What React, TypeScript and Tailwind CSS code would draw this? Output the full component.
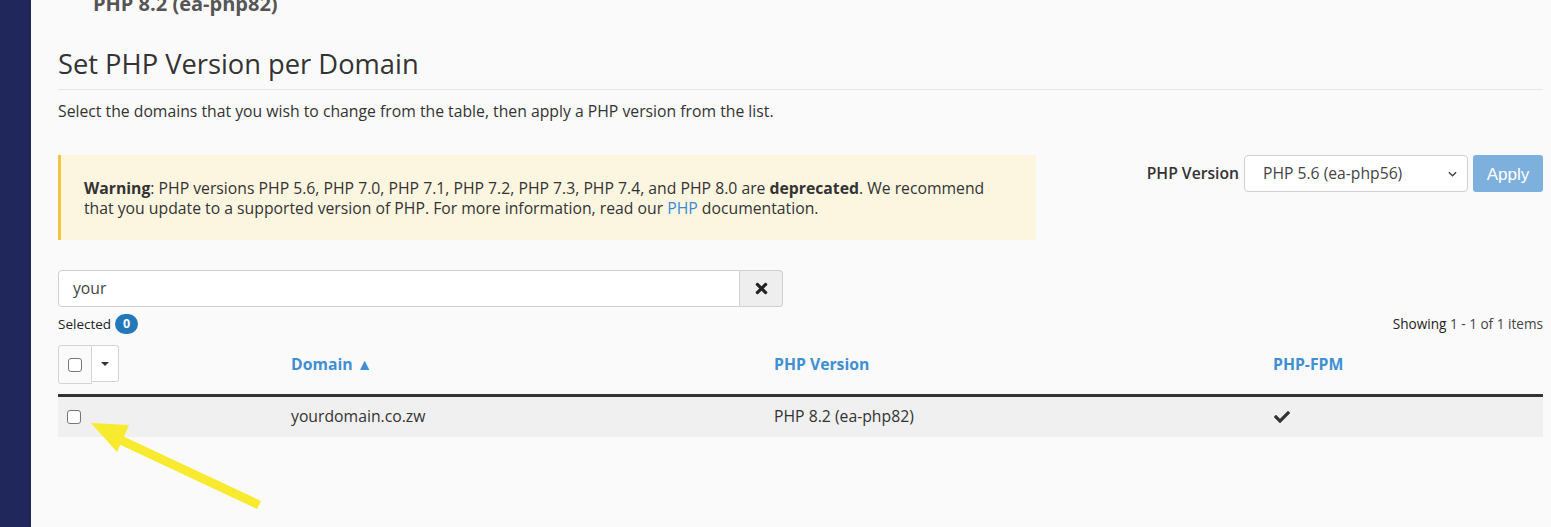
import React from 'react';

const font = { fontFamily: '"Open Sans", "Liberation Sans", sans-serif' };

function Checkbox() {
  return <span className="block w-[14px] h-[14px] rounded-[3px] border border-[#767676] bg-white" />;
}

function CheckIcon() {
  return (
    <svg viewBox="0 0 512 512" className="w-[16px] h-[16px] fill-[#333]">
      <path d="M173.9 439.4l-166.4-166.4c-10-10-10-26.2 0-36.2l36.2-36.2c10-10 26.2-10 36.2 0L192 312.7 432.1 72.6c10-10 26.2-10 36.2 0l36.2 36.2c10 10 10 26.2 0 36.2l-294.4 294.4c-10 10-26.2 10-36.2 0z" />
    </svg>
  );
}

function TimesIcon() {
  return (
    <svg viewBox="0 0 352 512" className="w-[13px] h-[17px] fill-[#222]">
      <path d="M242.7 256l100.1-100.1c12.3-12.3 12.3-32.2 0-44.5l-22.2-22.2c-12.3-12.3-32.2-12.3-44.5 0L176 189.3 75.9 89.2c-12.3-12.3-32.2-12.3-44.5 0L9.2 111.4c-12.3 12.3-12.3 32.2 0 44.5L109.3 256 9.2 356.1c-12.3 12.3-12.3 32.2 0 44.5l22.2 22.2c12.3 12.3 32.2 12.3 44.5 0L176 322.7l100.1 100.1c12.3 12.3 32.2 12.3 44.5 0l22.2-22.2c12.3-12.3 12.3-32.2 0-44.5L242.7 256z" />
    </svg>
  );
}

export default function App() {
  return (
    <div className="relative flex w-[1551px] h-[527px] overflow-hidden bg-[#fafafa] text-[#333]" style={font}>
      <aside className="w-[31px] shrink-0 bg-[#20275a]" />

      <main className="flex-1 flex flex-col pl-[27px] pr-[8px]">
        <div className="mt-[-9px] pl-[35px] text-[20px] leading-[26px] font-bold text-[#555]">PHP 8.2 (ea-php82)</div>

        <h2 className="mt-[32px] text-[27.3px] leading-[29px] font-normal text-[#333]">Set PHP Version per Domain</h2>
        <div className="mt-[11px] border-t border-[#e6e6e6]" />
        <p className="mt-[11px] text-[15.75px] leading-[20px]">
          Select the domains that you wish to change from the table, then apply a PHP version from the list.
        </p>

        <div className="mt-[34px] flex items-start">
          <div className="w-[978px] bg-[#fcf6e0] border-l-[3px] border-[#f2c443] pl-[23px] pr-[40px] pt-[23px] pb-[22px] text-[15.75px] leading-[20px]">
            <b>Warning</b>: PHP versions PHP 5.6, PHP 7.0, PHP 7.1, PHP 7.2, PHP 7.3, PHP 7.4, and PHP 8.0 are{' '}
            <b>deprecated</b>. We recommend that you update to a supported version of PHP. For more information, read
            our <span className="text-[#3a8bd4]">PHP</span> documentation.
          </div>
          <div className="ml-auto flex items-center">
            <span className="text-[15.7px] font-semibold mr-[5px]">PHP Version</span>
            <div className="w-[224px] h-[37px] flex items-center justify-between bg-white border border-[#cfcfcf] rounded-[4px] pl-[18px] pr-[10px] text-[15.7px] text-[#444]">
              <span>PHP 5.6 (ea-php56)</span>
              <svg viewBox="0 0 10 6" className="w-[9px] h-[6px] stroke-[#444] fill-none">
                <path d="M1 1l4 4 4-4" strokeWidth="1.6" />
              </svg>
            </div>
            <button
              className="ml-[5px] w-[70px] h-[37px] pt-[2px] rounded-[3px] bg-[#7eb0de] text-white text-[17px]"
              style={{ fontFamily: '"Liberation Sans", Arial, sans-serif' }}
            >
              Apply
            </button>
          </div>
        </div>

        <div className="mt-[30px] flex w-[725px] h-[37px]">
          <div className="flex-1 flex items-center bg-white border border-[#cfcfcf] rounded-l-[4px] pl-[14px] text-[15.7px] text-[#444]">
            your
          </div>
          <div className="w-[43px] flex items-center justify-center bg-[#eeeeee] border border-l-0 border-[#cfcfcf] rounded-r-[4px]">
            <TimesIcon />
          </div>
        </div>

        <div className="mt-[7px] flex items-center justify-between h-[20px]">
          <div className="flex items-center text-[13.5px] text-[#222]">
            <span>Selected</span>
            <span className="ml-[4px] w-[23px] h-[20px] rounded-full bg-[#2278b9] text-white text-[12.5px] font-bold flex items-center justify-center">
              0
            </span>
          </div>
          <div className="text-[13.6px]">
            <span className="text-[#222]">Showing</span> <span className="text-[#444]">1 - 1 of 1 items</span>
          </div>
        </div>

        <div className="mt-[11px] grid grid-cols-[233px_483px_499px_1fr] items-start h-[52px] border-b-[3px] border-[#333]">
          <div className="flex items-start">
            <div className="w-[34px] h-[39px] flex items-center justify-center bg-[#fafafa] border border-[#d4d4d4] rounded-l-[3px]">
              <Checkbox />
            </div>
            <div className="w-[27px] h-[37px] flex items-center justify-center bg-white border border-l-0 border-[#d4d4d4] rounded-r-[3px]">
              <span className="w-0 h-0 border-l-[4px] border-r-[4px] border-t-[4px] border-l-transparent border-r-transparent border-t-[#333]" />
            </div>
          </div>
          <div className="pt-[8px] text-[15.75px] leading-[22px] font-bold text-[#3f8fd2]">Domain ▲</div>
          <div className="pt-[8px] text-[15.75px] leading-[22px] font-bold text-[#3f8fd2]">PHP Version</div>
          <div className="pt-[8px] text-[15.75px] leading-[22px] font-bold text-[#3f8fd2]">PHP-FPM</div>
        </div>

        <div className="grid grid-cols-[233px_483px_499px_1fr] items-center h-[40px] bg-[#f0f0f0] text-[15.75px]">
          <div className="pl-[9px] pb-[1px]">
            <Checkbox />
          </div>
          <div>yourdomain.co.zw</div>
          <div>PHP 8.2 (ea-php82)</div>
          <div className="pl-[1px]">
            <CheckIcon />
          </div>
        </div>
      </main>

      <svg className="absolute left-0 top-0 w-[1551px] h-[527px] pointer-events-none" viewBox="0 0 1551 527">
        <line x1="112" y1="436" x2="259" y2="505" stroke="#f7ea2f" strokeWidth="9" />
        <polygon points="91,423 129,425 117,452" fill="#f7ea2f" />
      </svg>
    </div>
  );
}
